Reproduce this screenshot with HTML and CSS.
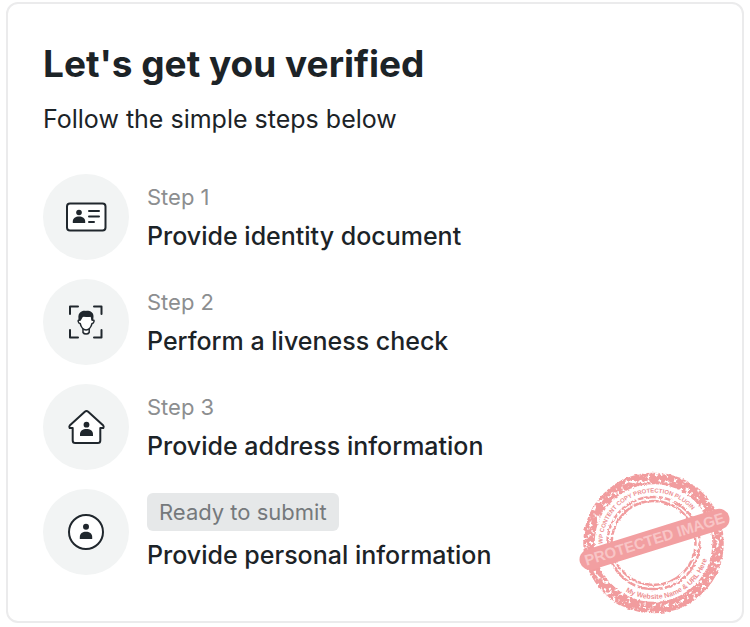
FILE: index.html
```html
<!DOCTYPE html>
<html lang="en">
<head>
<meta charset="utf-8">
<meta name="viewport" content="width=device-width, initial-scale=1">
<title>Let's get you verified</title>
<link rel="stylesheet" href="styles.css">
</head>
<body>
<main class="card">
  <h1 class="title">Let's get you verified</h1>
  <p class="subtitle">Follow the simple steps below</p>
  <ol class="steps">
    <li class="step">
      <span class="step-icon">
        <svg width="44" height="44" viewBox="0 0 44 44" aria-hidden="true">
          <rect class="line" x="3" y="8.5" width="38.5" height="27" rx="3"/>
          <circle class="solid" cx="15" cy="17.5" r="2.8"/>
          <path class="solid" d="M8.800 28v-1.500c0-3.400 2.800-5 6.200-5s6.200 1.600 6.200 5V28z"/>
          <path class="line" d="M25 16h10M25 21.500h10M25 27h5"/>
        </svg>
      </span>
      <div class="step-text"><span class="step-label">Step 1</span><h2 class="step-title">Provide identity document</h2></div>
    </li>
    <li class="step">
      <span class="step-icon">
        <svg width="44" height="44" viewBox="0 0 44 44" aria-hidden="true">
          <path class="corner" d="M6 14V6.500h8M30 6.500h7.500V14M37.500 30v7.500H30M14 37.500H6V30"/>
          <path class="face" d="M19 28v4.500c1.200 2 5 2 6.200 0V28"/>
          <path class="face" d="M16 16v4c-1.300-.4-2 .3-1.800 1.500.2 1.300 1 2 2 2 .8 3.500 3.200 6.500 5.900 6.500s5.100-3 5.900-6.500c1 0 1.800-.7 2-2 .2-1.200-.5-1.900-1.800-1.500v-4z"/>
          <path class="solid" d="M14.800 21c-.6-3-.8-6.500.8-8 1.700-2 4.300-2.400 6.400-2.100 4.500-.3 7.500 1.800 7.500 5.300 0 1.600-.2 3.200-.5 4.800l-1.500-.8-.9-3.700c-2.500 1-5.200.6-6.700-.5-1.300 1-1.900 2.600-3 4.200z"/>
        </svg>
      </span>
      <div class="step-text"><span class="step-label">Step 2</span><h2 class="step-title">Perform a liveness check</h2></div>
    </li>
    <li class="step">
      <span class="step-icon">
        <svg width="44" height="44" viewBox="0 0 44 44" aria-hidden="true">
          <path class="line" d="M20.800 6.700L5.700 20.500q-.8 1 0 2.500h3v12.500q0 2.500 2.500 2.500h22.600q2.500 0 2.500-2.500V23h3q.8-1.500 0-2.500L24.200 6.700q-1.700-1.400-3.400 0z"/>
          <circle class="solid" cx="22.5" cy="19.7" r="2.9"/>
          <path class="solid" d="M16 31v-1.800c0-3.400 2.900-5.200 6.500-5.200s6.500 1.800 6.500 5.200V31z"/>
        </svg>
      </span>
      <div class="step-text"><span class="step-label">Step 3</span><h2 class="step-title">Provide address information</h2></div>
    </li>
    <li class="step">
      <span class="step-icon">
        <svg width="44" height="44" viewBox="0 0 44 44" aria-hidden="true">
          <circle class="line" cx="22" cy="22" r="17"/>
          <circle class="solid" cx="22" cy="16.7" r="3"/>
          <path class="solid" d="M15.800 29v-2c0-3.400 2.800-5.200 6.200-5.200s6.200 1.800 6.200 5.200v2z"/>
        </svg>
      </span>
      <div class="step-text"><span class="badge">Ready to submit</span><h2 class="step-title">Provide personal information</h2></div>
    </li>
  </ol>
  <svg class="stamp" width="160" height="150" viewBox="0 0 160 150" role="img" aria-label="Protected image">
    <defs>
      <filter id="grain" x="0" y="0" width="160" height="150" filterUnits="userSpaceOnUse" color-interpolation-filters="sRGB">
        <feTurbulence type="fractalNoise" baseFrequency=".26" numOctaves="3" seed="8" result="n"/>
        <feColorMatrix in="n" type="matrix" values="0 0 0 0 0  0 0 0 0 0  0 0 0 0 0  0 0 0 7 -2.1" result="m"/>
        <feDisplacementMap in="SourceGraphic" in2="n" scale="3" xChannelSelector="R" yChannelSelector="G" result="rough"/>
        <feComposite in="rough" in2="m" operator="in"/>
      </filter>
      <path id="top-arc" d="M28.500 75A51 51 0 1 1 130.500 74"/>
      <path id="bottom-arc" d="M51.500 122.500A56 56 0 0 0 135.500 74"/>
    </defs>
    <g filter="url(#grain)" class="rings">
      <circle cx="79.5" cy="74" r="64.5" stroke-width="11.5"/>
      <circle cx="79.5" cy="74" r="46" stroke-width="2.5"/>
      <circle cx="79.5" cy="74" r="42" stroke-width="2.5"/>
    </g>
    <text class="arc-text arc-top"><textPath href="#top-arc">WP CONTENT COPY PROTECTION PLUGIN</textPath></text>
    <text class="arc-text"><textPath href="#bottom-arc">My Website Name &amp; URL Here</textPath></text>
    <path class="band" d="M16 90.500L145 50.300"/>
    <text class="band-text" text-anchor="middle" transform="translate(82 75) rotate(-17.3)">PROTECTED IMAGE</text>
  </svg>
</main>
</body>
</html>
```
FILE: styles.css
```css
* { box-sizing: border-box; }

body {
  margin: 0;
  padding: 2px 6px 4px;
  background: #fff;
  color: #1c2327;
  font-family: Inter, "Liberation Sans", sans-serif;
}

.card {
  position: relative;
  padding: 36px 34px 46px 35px;
  border: 2px solid #ebebec;
  border-radius: 12px;
}

.title {
  margin: 0;
  font-size: 37px;
  font-weight: 700;
  line-height: 48px;
}

.subtitle {
  margin: 16px 0 40px;
  font-size: 25px;
  line-height: 30px;
}

.steps {
  display: flex;
  flex-direction: column;
  gap: 19px;
  margin: 0;
  padding: 0;
  list-style: none;
}

.step {
  display: flex;
  align-items: center;
  gap: 18px;
}

.step-icon {
  display: flex;
  flex: none;
  align-items: center;
  justify-content: center;
  width: 86px;
  height: 86px;
  border-radius: 50%;
  background: #f2f4f4;
}

.step-text {
  display: flex;
  flex-direction: column;
  align-items: flex-start;
  gap: 9px;
  padding-bottom: 2px;
}

.step-label {
  color: #8c8e90;
  font-size: 22px;
  line-height: 30px;
}

.step-title {
  margin: 0;
  font-size: 25px;
  font-weight: 450;
  line-height: 30px;
}

.badge {
  padding: 4px 12px;
  border-radius: 6px;
  background: #e6e8e9;
  color: #75797c;
  font-size: 22px;
  line-height: 30px;
}

.line,
.corner,
.face {
  fill: #fff;
  stroke: #20272d;
  stroke-width: 2;
  stroke-linecap: round;
  stroke-linejoin: round;
}

.corner { fill: none; }
.face { stroke-width: 1.5px; }
.solid { fill: #20272d; }

.stamp {
  position: absolute;
  right: 8px;
  bottom: 2px;
}

.rings {
  fill: none;
  stroke: #f19c9e;
}

.arc-text,
.band-text {
  font-family: "Liberation Sans", sans-serif;
  font-weight: 700;
}

.arc-text {
  font-size: 7px;
  fill: #ee9092;
}

.arc-top { font-size: 6px; }

.band {
  stroke: #f29fa1;
  stroke-width: 21;
  stroke-linecap: round;
}

.band-text {
  font-size: 15px;
  fill: #f8c5c6;
}
```
